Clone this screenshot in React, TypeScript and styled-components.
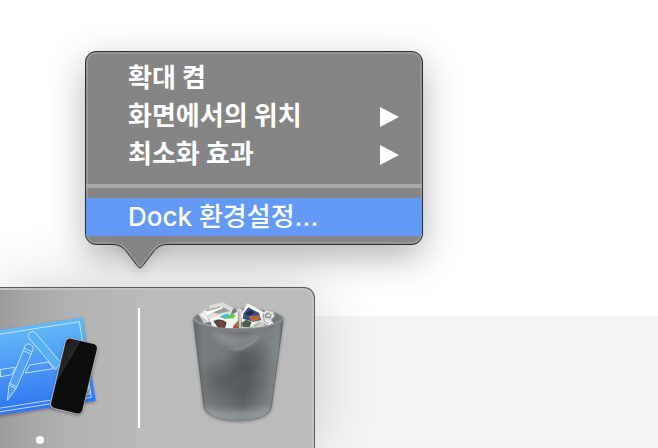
import React from "react";
import styled, { createGlobalStyle, css } from "styled-components";

const GlobalStyle = createGlobalStyle`
  * { box-sizing: border-box; }
  body {
    margin: 0;
    font-family: Inter, "Noto Sans CJK KR", sans-serif;
    background: #ffffff;
  }
`;

const Desktop = styled.main`
  min-height: 100vh;
  display: flex;
  flex-direction: column;
  align-items: flex-start;
  overflow: hidden;
  background: linear-gradient(#ffffff 316px, #f4f4f4 316px);
`;

const Menu = styled.div`
  position: relative;
  z-index: 1;
  width: 338px;
  max-width: 100%;
  margin: 51px 0 0 85px;
  padding: 7px 0 8px;
  border: 1px solid #2c2e2e;
  border-radius: 11px;
  background: #858585;
  box-shadow: inset 0 0 0 2px #949696, 0 12px 36px rgba(0, 0, 0, 0.3);
`;

const MenuItem = styled.button<{ $active?: boolean }>`
  display: flex;
  align-items: center;
  justify-content: space-between;
  width: 100%;
  height: 38px;
  padding: 0 23px 0 42px;
  border: 0;
  background: transparent;
  color: #ffffff;
  font: inherit;
  font-size: 26px;
  line-height: 38px;
  font-weight: 700;
  text-align: left;
  white-space: nowrap;
  ${(p) =>
    p.$active &&
    css`
      background: #6399f7;
      font-weight: 500;
    `}
`;

const Divider = styled.hr`
  height: 4px;
  margin: 11px 0 10px;
  border: 0;
  background: #a9a9a9;
`;

const Pointer = styled.svg`
  position: absolute;
  left: 20px;
  top: calc(100% - 2px);
  width: 68px;
  height: 28px;
  filter: drop-shadow(0 5px 5px rgba(0, 0, 0, 0.12));
`;

const Dock = styled.section`
  flex: 1;
  display: flex;
  align-items: flex-start;
  width: 315px;
  max-width: 100%;
  margin-top: 42px;
  padding-top: 12px;
  border: solid #5b5d5d;
  border-width: 1px 1px 0 0;
  border-radius: 0 11px 0 0;
  background: linear-gradient(90deg, #9c9a9c 0, #a9a8a9 30px, #b5b4b5 80px, #bbbbbb 150px);
  box-shadow: inset -2px 2px 0 #c3c5c3, 0 0 60px rgba(0, 0, 0, 0.18);
`;

const AppTile = styled.div`
  display: flex;
  flex-direction: column;
  gap: 16px;
  width: 138px;
  padding-top: 10px;
`;

const RunningDot = styled.span`
  width: 8px;
  height: 8px;
  margin-left: 36px;
  border-radius: 50%;
  background: #ffffff;
`;

const DockDivider = styled.span`
  width: 2px;
  height: 120px;
  margin: 8px 47px 0 0;
  background: #ffffff;
`;

const Arrow = () => (
  <svg width="19" height="22" viewBox="0 0 19 22" aria-hidden="true">
    <path d="M0 2 L19 12 L0 22 Z" fill="#fff" />
  </svg>
);

const XcodeIcon = () => (
  <svg width="105" height="110" viewBox="0 90 315 330" role="img" aria-label="Xcode">
    <defs>
      <linearGradient id="sheet" x1="0" y1="0" x2="0.15" y2="1">
        <stop offset="0" stopColor="#6bc4f4" />
        <stop offset="0.45" stopColor="#519ff5" />
        <stop offset="1" stopColor="#2e72f2" />
      </linearGradient>
      <linearGradient id="screen" x1="0" y1="0" x2="0.9" y2="0.6">
        <stop offset="0" stopColor="#1c1c1c" />
        <stop offset="0.34" stopColor="#272727" />
        <stop offset="0.35" stopColor="#111" />
      </linearGradient>
      <filter id="iconShadow" x="-20%" y="-20%" width="140%" height="140%">
        <feDropShadow dx="0" dy="4" stdDeviation="4" floodOpacity="0.35" />
      </filter>
    </defs>
    <path d="M-40 156 L247 112 L287 362 L-40 411 Z" fill="url(#sheet)" filter="url(#iconShadow)" />
    <g fill="none" stroke="#d4eeff" strokeWidth="2.5" strokeLinejoin="round">
      <path d="M-10 164 L238 125 L274 352 L-10 397" />
      <path d="M-10 386 L268 342 M262 303 L268 342" />
      <path d="M-4 269 L45 262 L36 284 L2 290 Z M2 269 V290" />
      <path d="M88 255 L145 246 L160 266 L76 279 Z" />
      <path d="M87 174 C80 162 95 149 106 158 L182 247 L167 269 Z" fill="#58b1f3" />
      <path d="M76 196 C83 187 102 195 99 208 L93 223 L48 326 L22 361 L27 315 L70 212 Z" fill="#529ff5" />
      <path d="M70 212 L93 222 M73 205 L96 215 M27 315 L48 326 M29 310 L50 320" />
    </g>
    <g filter="url(#iconShadow)">
      <rect x="171" y="179" width="101" height="218" rx="15" transform="rotate(13.5 221.5 288)" fill="#b9b9b9" />
      <rect x="174" y="181" width="96" height="214" rx="13" transform="rotate(13.5 221.5 288)" fill="url(#screen)" />
    </g>
  </svg>
);

const TrashIcon = () => (
  <svg width="100" height="125" viewBox="51 60 300 375" role="img" aria-label="휴지통">
    <defs>
      <linearGradient id="can" x1="0" y1="0" x2="1" y2="0">
        <stop offset="0" stopColor="#666a6d" />
        <stop offset="0.13" stopColor="#777b7e" />
        <stop offset="0.35" stopColor="#72777a" />
        <stop offset="0.55" stopColor="#60666a" />
        <stop offset="0.8" stopColor="#777c7f" />
        <stop offset="0.94" stopColor="#81878a" />
        <stop offset="1" stopColor="#5f6568" />
      </linearGradient>
      <radialGradient id="canShade">
        <stop offset="0" stopColor="#3c4347" stopOpacity="0.5" />
        <stop offset="1" stopColor="#3c4347" stopOpacity="0" />
      </radialGradient>
      <filter id="haze" x="-30%" y="-30%" width="160%" height="160%">
        <feGaussianBlur stdDeviation="9" />
      </filter>
      <filter id="canShadow" x="-20%" y="-20%" width="140%" height="140%">
        <feDropShadow dx="0" dy="4" stdDeviation="4" floodOpacity="0.3" />
      </filter>
      <clipPath id="canClip">
        <path d="M69 116 C85 157 320 157 341 116 L306 378 C301 440 111 440 100 378 Z" />
      </clipPath>
    </defs>
    <g filter="url(#canShadow)">
      <ellipse cx="205" cy="116" rx="136" ry="32" fill="#92979a" />
      <path d="M69 116 C85 157 320 157 341 116 L306 378 C301 437 111 437 100 378 Z" fill="url(#can)" />
    </g>
    <ellipse cx="205" cy="114" rx="130" ry="26" fill="#74797c" />
    <path d="M85 102 L99 90 L118 86 L125 125 L101 130 Z" fill="#c9cbca" />
    <path d="M88 104 L107 93 L116 126 Z" fill="#efefed" />
    <path d="M98 94 L121 83 L115 77 L158 67 L190 85 L181 106 L146 104 L121 118 Z" fill="#deded9" />
    <path d="M105 91 L154 79 L181 93 L144 101 Z" fill="#9b9d9b" />
    <path d="M103 94 L157 79 L158 85 L111 105 Z" fill="#fff" />
    <path d="M119 116 L146 104 L190 101 L207 92 L212 143 L174 146 L126 139 Z" fill="#f3f3f1" />
    <path d="M130 123 C143 115 158 117 170 128 L165 144 L144 143 Z" fill="#504744" />
    <path d="M144 127 L154 122 L163 132 L157 143 Z" fill="#8b3e38" />
    <path d="M148 110 L168 101 L183 105 L166 117 Z" fill="#44b9de" />
    <path d="M162 117 L184 101 L197 104 L190 115 Z" fill="#61cb37" />
    <path d="M191 137 L209 116 L207 145 L188 146 Z" fill="#b64a2b" />
    <path d="M197 134 L209 123 L208 143 Z" fill="#489b6c" />
    <path d="M199 86 L211 84 L219 91 L210 145 Z" fill="#d5d2ce" />
    <path d="M214 102 L232 70 L281 96 L278 138 L216 144 Z" fill="#f7f7f4" />
    <path d="M221 100 L235 82 L267 99 L274 121 L250 125 L218 116 Z" fill="#384d85" />
    <path d="M226 102 L241 91 L253 98 L239 107 Z" fill="#202844" />
    <path d="M235 109 L267 105 L272 117 L246 125 Z" fill="#be6536" />
    <path d="M215 128 L229 119 L245 127 L239 141 L218 142 Z" fill="#4b6145" />
    <path d="M244 137 L267 121 L282 130 L288 142 L247 145 Z" fill="#d4cfc5" />
    <path d="M275 103 L288 91 L309 96 L314 109 L303 119 L311 130 L293 137 L275 125 Z" fill="#e0e1df" />
    <path d="M283 105 L294 97 L305 104 L301 116 L286 113 Z" fill="#8e9190" />
    <path d="M288 107 L298 102 L299 110 Z M285 119 L307 130 L294 132 Z" fill="#fff" />
    <path d="M109 93 L150 82 M252 140 L270 129 M279 101 L283 124 L297 130 M207 97 L205 140" fill="none" stroke="#777b79" strokeWidth="2" />
    <path d="M69 113 C90 157 318 157 341 113 C338 171 74 171 69 113" fill="#757a7d" />
    <g clipPath="url(#canClip)">
      <ellipse cx="165" cy="304" rx="91" ry="86" fill="url(#canShade)" />
      <ellipse cx="240" cy="270" rx="75" ry="120" fill="url(#canShade)" />
      <path d="M122 153 Q202 175 288 153 Q243 212 195 211 Q178 206 176 193 Q144 195 122 153" fill="#afb2b4" opacity="0.45" filter="url(#haze)" />
      <path d="M172 206 Q224 208 269 166 Q249 204 203 213 Z" fill="#b3b6b7" opacity="0.25" />
      <path d="M90 375 Q150 409 306 379 L300 425 H106 Z" fill="#a5aaad" opacity="0.65" filter="url(#haze)" />
      <path d="M190 317 Q233 283 279 281 M114 257 Q144 222 177 234" stroke="#a4a9ab" strokeWidth="14" fill="none" opacity="0.14" filter="url(#haze)" />
      <path d="M72 128 L103 385 Q122 424 205 424 Q292 421 304 384 L338 128" fill="none" stroke="#4f565a" strokeWidth="4" opacity="0.45" />
    </g>
    <path d="M70 117 C90 156 318 156 340 117" fill="none" stroke="#93989b" strokeWidth="2" />
  </svg>
);

export default function App() {
  return (
    <>
      <GlobalStyle />
      <Desktop>
        <Menu role="menu">
          <MenuItem role="menuitem">확대 켬</MenuItem>
          <MenuItem role="menuitem" aria-haspopup="menu">
            화면에서의 위치
            <Arrow />
          </MenuItem>
          <MenuItem role="menuitem" aria-haspopup="menu">
            최소화 효과
            <Arrow />
          </MenuItem>
          <Divider />
          <MenuItem role="menuitem" $active>
            Dock 환경설정...
          </MenuItem>
          <Pointer viewBox="0 0 68 28" aria-hidden="true">
            <path d="M6 0 V2.5 C13 3 16 5 20 9 L31 23 Q34 27 37 23 L48 9 C52 5 55 3 62 2.5 V0 Z" fill="#858585" />
            <path d="M6 1 C14 1 18 4 22 9 L32 22 Q34 25 36 22 L46 9 C50 4 54 1 62 1" fill="none" stroke="#949696" strokeWidth="1.5" />
            <path d="M6 2.5 C13 2.5 16 5 20 9 L31 23.5 Q34 28.5 37 23.5 L48 9 C52 5 55 2.5 62 2.5" fill="none" stroke="#2c2e2e" strokeWidth="1" />
          </Pointer>
        </Menu>
        <Dock aria-label="Dock">
          <AppTile>
            <XcodeIcon />
            <RunningDot />
          </AppTile>
          <DockDivider />
          <TrashIcon />
        </Dock>
      </Desktop>
    </>
  );
}
